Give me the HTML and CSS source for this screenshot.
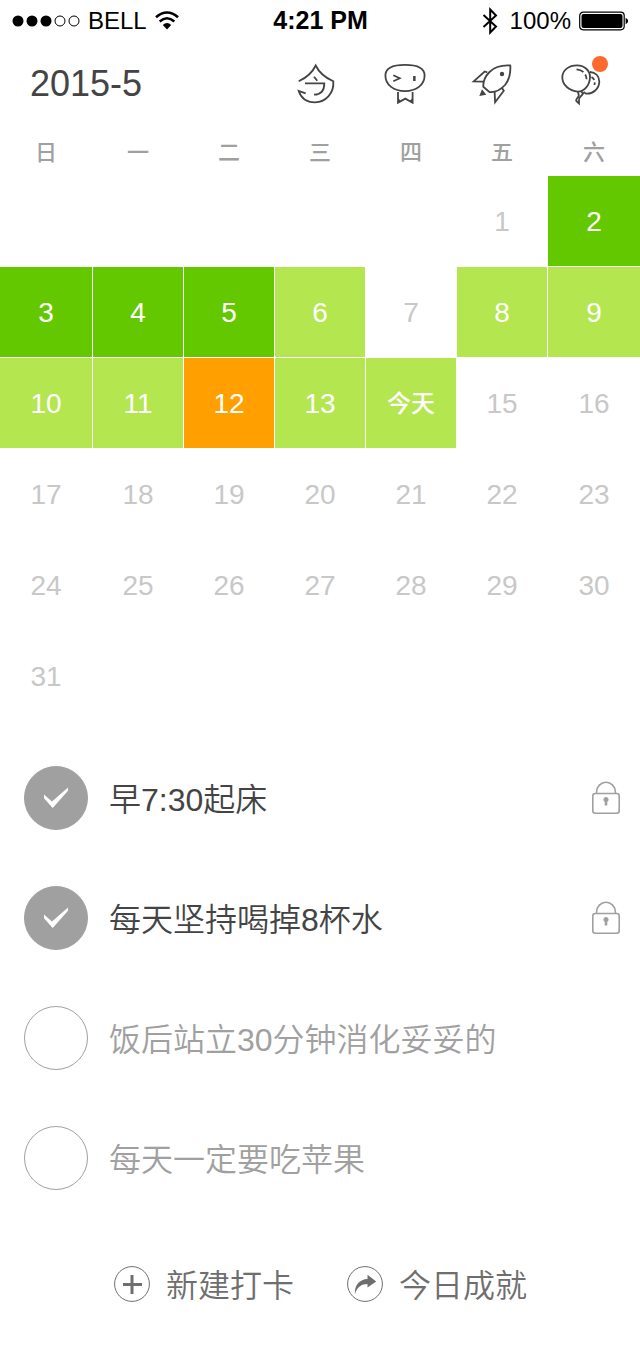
FILE: index.html
```html
<!DOCTYPE html>
<html lang="zh-CN">
<head>
<meta charset="utf-8">
<meta name="viewport" content="width=device-width, initial-scale=1">
<title>2015-5</title>
<link rel="stylesheet" href="styles.css">
</head>
<body>
<div class="status">
  <div class="status-left">
    <svg class="signal" width="68" height="12" viewBox="0 0 68 12" aria-hidden="true">
      <circle cx="6" cy="6" r="5.5"/><circle cx="20" cy="6" r="5.5"/><circle cx="34" cy="6" r="5.5"/>
      <circle class="hollow" cx="48" cy="6" r="5"/><circle class="hollow" cx="62" cy="6" r="5"/>
    </svg>
    <span>BELL</span>
    <svg width="24" height="20" viewBox="0 0 24 20" aria-hidden="true">
      <path d="M1 6.2Q12-3.2 23 6.2" fill="none" stroke="#000" stroke-width="2.6"/>
      <path d="M4.700 10.500Q12 4 19.300 10.500" fill="none" stroke="#000" stroke-width="2.600"/>
      <path d="M7.800 14Q12 10 16.200 14L12 18.500Z"/>
    </svg>
  </div>
  <time class="clock">4:21 PM</time>
  <div class="status-right">
    <svg width="16" height="28" viewBox="0 0 16 28" aria-hidden="true">
      <path d="M1.500 8 14 19.500 8.200 25.500V2.500L14 8.500 1.500 20" fill="none" stroke="#000" stroke-width="2"/>
    </svg>
    <span class="percent">100%</span>
    <svg width="50" height="20" viewBox="0 0 50 20" aria-hidden="true">
      <rect x=".7" y="1.200" width="44.500" height="17.600" rx="3.500" fill="none" stroke="#000" stroke-width="1.200"/>
      <rect x="2.500" y="3" width="41" height="14" rx="2"/>
      <path d="M46.600 6.800Q49.200 8 49.200 10T46.600 13.200Z"/>
    </svg>
  </div>
</div>

<header class="header">
  <h1 class="month">2015-5</h1>
  <nav class="tools">
    <button class="tool" type="button" aria-label="今">
      <svg class="line-icon" viewBox="-4 -4 48 48">
        <path d="M2.700 17.300Q15 11.500 19.700 1.500Q24.500 11.500 37.300 17.300C38.200 29 30 38.300 19 38.300C11 38.300 5 34 2.700 27L9.700 29.300"/>
        <path d="M9 19.400H28.300C28.300 26 25 30.500 18 30.700M18 12.700 21.300 16.700"/>
      </svg>
    </button>
    <button class="tool" type="button" aria-label="勋章">
      <svg class="line-icon" viewBox="-4 -4 48 48">
        <path d="M21 .9C33 .9 40.600 4 40.600 11.500C40.600 21 32 27.200 21 27.200C10 27.200 1.400 21 1.400 11.500C1.400 4 9 .9 21 .9Z"/>
        <path d="M9.300 11.300 15.700 14.300 9.300 17.300M14 28V38.800L21.300 34.600 28.600 38.800V28"/>
        <path class="solid" d="M29.100 12H31.600V17H29.100ZM14 34V39.300L17 37ZM28.600 34V39.300L25.600 37Z"/>
      </svg>
    </button>
    <button class="tool" type="button" aria-label="火箭">
      <svg class="line-icon" viewBox="-4 -4 48 48">
        <path d="M38.300 1.500C30 1 22 3.500 17.500 8C13.500 12 11 17.500 11.300 22.700L17.300 28C23 28.500 29 25.500 33 21C37.500 15.500 38.700 8 38.300 1.500Z"/>
        <path d="M15.300 8.300 12.700 7.500 1.700 17.300 11.300 17.600M22.600 27.600 23.100 38.200 31.800 26.700 30 24"/>
        <circle class="solid" cx="30" cy="10" r="2.200"/>
        <path class="solid" d="M10 25.300 14.300 30.700 7.300 32Z"/>
      </svg>
    </button>
    <button class="tool" type="button" aria-label="气球,有新消息">
      <svg class="line-icon" viewBox="-4 -4 48 48">
        <path d="M17 1.400C25 1.400 30.300 7 30 13.500C29.600 22 24 27.300 18 27.700C9 26.500 2.300 21 2.300 13.500C2.300 6 9 1.400 17 1.400Z"/>
        <path d="M30 8C35.500 8.500 39.300 12 39.300 17.500C39.300 24.500 33 30.500 25.700 29.500L23.500 28"/>
        <path d="M16.500 5.400Q21 5.800 23.400 8.200M25.200 10.500Q26.500 12.500 26.600 15.300M31.500 13Q33.500 14.300 34.200 16M34.800 18.300 34.500 21"/>
        <path d="M18 27.700 18.800 31.500C18 34 15.500 35 16.300 37L19 39.500V36C18.500 33.500 21.500 32.500 23 29.500L21 27.200"/>
      </svg>
      <span class="badge"></span>
    </button>
  </nav>
</header>

<table class="calendar">
  <thead>
    <tr class="week"><th>日</th><th>一</th><th>二</th><th>三</th><th>四</th><th>五</th><th>六</th></tr>
  </thead>
  <tbody>
    <tr class="week"><td></td><td></td><td></td><td></td><td></td><td>1</td><td class="full">2</td></tr>
    <tr class="week"><td class="full">3</td><td class="full">4</td><td class="full">5</td><td class="part">6</td><td>7</td><td class="part">8</td><td class="part">9</td></tr>
    <tr class="week"><td class="part">10</td><td class="part">11</td><td class="marked">12</td><td class="part">13</td><td class="part today">今天</td><td>15</td><td>16</td></tr>
    <tr class="week"><td>17</td><td>18</td><td>19</td><td>20</td><td>21</td><td>22</td><td>23</td></tr>
    <tr class="week"><td>24</td><td>25</td><td>26</td><td>27</td><td>28</td><td>29</td><td>30</td></tr>
    <tr class="week"><td>31</td><td></td><td></td><td></td><td></td><td></td><td></td></tr>
  </tbody>
</table>

<ul class="tasks">
  <li class="task">
    <span class="check">
      <input id="t1" type="checkbox" checked>
      <svg viewBox="0 0 64 64" aria-hidden="true"><path d="M20 28.500 28 35.500 44 21.500V24.800L28.700 42 20 32.200Z"/></svg>
    </span>
    <label for="t1">早7:30起床</label>
    <svg class="lock" viewBox="0 0 28 34" aria-hidden="true">
      <rect x=".8" y="12.500" width="26.400" height="19.800" rx="2.500"/><path d="M4.600 12.500V11A9.400 9.700 0 0 1 23.400 11V12.500"/>
      <path class="keyhole" d="M12.700 24.500V20.800A2.600 2.600 0 1 1 15.300 20.800V24.500Z"/>
    </svg>
  </li>
  <li class="task">
    <span class="check">
      <input id="t2" type="checkbox" checked>
      <svg viewBox="0 0 64 64" aria-hidden="true"><path d="M20 28.500 28 35.500 44 21.500V24.800L28.700 42 20 32.200Z"/></svg>
    </span>
    <label for="t2">每天坚持喝掉8杯水</label>
    <svg class="lock" viewBox="0 0 28 34" aria-hidden="true">
      <rect x=".8" y="12.500" width="26.400" height="19.800" rx="2.500"/><path d="M4.600 12.500V11A9.400 9.700 0 0 1 23.400 11V12.500"/>
      <path class="keyhole" d="M12.700 24.500V20.800A2.600 2.600 0 1 1 15.300 20.800V24.500Z"/>
    </svg>
  </li>
  <li class="task pending">
    <span class="check"><input id="t3" type="checkbox"></span>
    <label for="t3">饭后站立30分钟消化妥妥的</label>
  </li>
  <li class="task pending">
    <span class="check"><input id="t4" type="checkbox"></span>
    <label for="t4">每天一定要吃苹果</label>
  </li>
</ul>

<footer class="actions">
  <button class="action" type="button">
    <svg viewBox="0 0 36 36" aria-hidden="true"><circle cx="18" cy="18" r="17.400"/><path class="plus" d="M18 9V28M9 18.500H28"/></svg>
    <span>新建打卡</span>
  </button>
  <button class="action" type="button">
    <svg viewBox="0 0 36 36" aria-hidden="true"><circle cx="18" cy="18" r="17.400"/><path class="arrow" d="M8 28C7 19 13 13.300 20.500 13V8.800L29.200 15.500 20.500 21.500V18C14.500 18 10 21 8 28Z"/></svg>
    <span>今日成就</span>
  </button>
</footer>
</body>
</html>
```

FILE: styles.css
```css
* {
  box-sizing: border-box;
}

body {
  margin: 0;
  background: #fff;
  color: #444;
  font-family: "Liberation Sans", "Noto Sans CJK SC", sans-serif;
}

button {
  padding: 0;
  border: 0;
  background: none;
  color: inherit;
  font: inherit;
}

svg {
  display: block;
  flex: none;
}

/* Status bar */
.status {
  display: grid;
  grid-template-columns: 1fr auto 1fr;
  align-items: center;
  height: 40px;
  padding: 1px 11px 0 12px;
  color: #000;
  font-size: 24px;
}

.status-left,
.status-right {
  display: flex;
  align-items: center;
  gap: 8px;
}

.status-right {
  justify-content: flex-end;
}

.percent {
  margin-left: 4px;
}

.hollow {
  fill: none;
  stroke: #000;
}

.clock {
  font-size: 25px;
  font-weight: bold;
}

/* Month title and tools */
.header {
  display: flex;
  align-items: center;
  justify-content: space-between;
  height: 88px;
  padding: 0 36px 0 30px;
}

.month {
  margin: 0;
  font-size: 36px;
  font-weight: normal;
}

.tools {
  display: flex;
  gap: 40px;
}

.tool {
  position: relative;
  width: 48px;
  height: 48px;
}

.line-icon {
  width: 48px;
  height: 48px;
  fill: none;
  stroke: #444;
  stroke-width: 1.8;
}

.solid {
  fill: #444;
  stroke: none;
}

.badge {
  position: absolute;
  top: -4px;
  right: -4px;
  width: 16px;
  height: 16px;
  border-radius: 50%;
  background: #fd6a2d;
}

/* Calendar */
.calendar {
  display: block;
}

.calendar thead,
.calendar tbody {
  display: grid;
  gap: 1px;
}

.week {
  display: grid;
  grid-template-columns: 92fr repeat(5, 90fr) 92fr;
  gap: 1px;
}

.week th,
.week td {
  display: flex;
  align-items: center;
  justify-content: center;
  padding: 0;
}

.week th {
  height: 48px;
  padding-bottom: 4px;
  color: #a0a0a0;
  font-size: 22px;
  font-weight: 500;
}

.week td {
  height: 90px;
  padding-top: 1px;
  color: #c8c8c8;
  font-size: 28px;
}

.week .full {
  background: #64c800;
  color: #fff;
}

.week .part {
  background: #b4e650;
  color: #fff;
}

.week .marked {
  background: #ffa000;
  color: #fff;
}

.week .today {
  padding: 0 0 4px;
  font-size: 24px;
  font-weight: 500;
}

/* Tasks */
.tasks {
  margin: 17px 0 0;
  padding: 0;
  list-style: none;
}

.task {
  display: flex;
  align-items: center;
  gap: 21px;
  height: 120px;
  padding: 0 20px 0 24px;
  font-size: 32px;
  font-weight: 350;
}

.task label {
  flex: 1;
  padding-bottom: 3px;
}

.pending {
  color: #a0a0a0;
}

.check {
  display: grid;
  flex: none;
  width: 64px;
  height: 64px;
}

.check > * {
  grid-area: 1 / 1;
}

.check input {
  appearance: none;
  width: 64px;
  height: 64px;
  margin: 0;
  border: 1px solid #a0a0a0;
  border-radius: 50%;
}

.check input:checked {
  background: #a0a0a0;
}

.check svg {
  z-index: 1;
  fill: #fff;
  pointer-events: none;
}

.lock {
  width: 28px;
  height: 34px;
  fill: none;
  stroke: #a0a0a0;
  stroke-width: 1.6;
}

.lock .keyhole {
  fill: #a0a0a0;
  stroke: none;
}

/* Bottom actions */
.actions {
  display: flex;
  align-items: center;
  justify-content: center;
  gap: 53px;
  height: 132px;
  padding-left: 1px;
}

.action {
  display: flex;
  align-items: center;
  gap: 16px;
  color: #6e6e6e;
  font-size: 32px;
  font-weight: 350;
}

.action span {
  padding-bottom: 3px;
}

.action svg {
  width: 36px;
  height: 36px;
  fill: none;
  stroke: #6e6e6e;
}

.action .plus {
  stroke-width: 3;
}

.action .arrow {
  fill: #6e6e6e;
  stroke: none;
}
```
